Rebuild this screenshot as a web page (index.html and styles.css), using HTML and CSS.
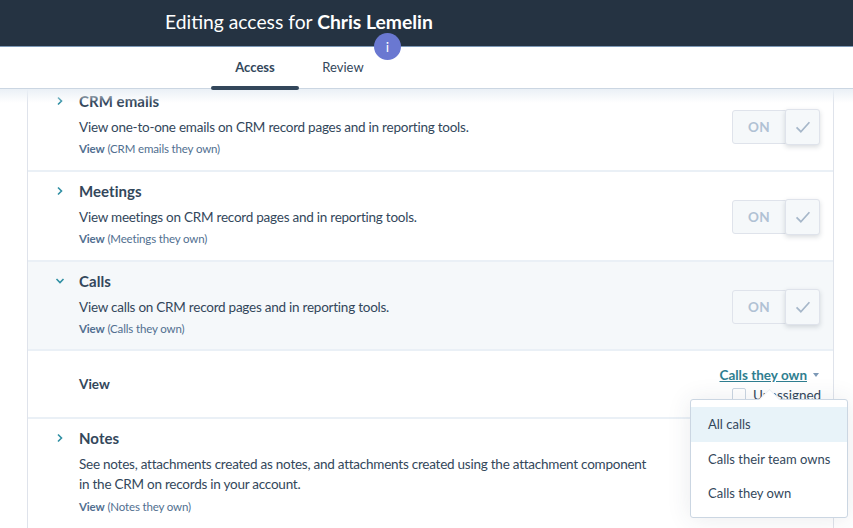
FILE: index.html
```html
<!DOCTYPE html>
<html lang="en">
<head>
<meta charset="utf-8">
<title>Editing access</title>
<link rel="stylesheet" href="styles.css">
</head>
<body>
<div class="page">
  <header class="topbar">
    <h1 class="title">Editing access for <strong>Chris Lemelin</strong></h1>
    <span class="info">i</span>
  </header>
  <nav class="tabs">
    <a class="tab active">Access</a>
    <a class="tab">Review</a>
  </nav>
  <main class="content">
    <div class="card">
      <section class="row first">
        <svg class="chev" viewBox="0 0 10 10"><path d="M3 1.5 6.5 5 3 8.5"/></svg>
        <div class="body">
          <h2>CRM emails</h2>
          <p class="desc">View one-to-one emails on CRM record pages and in reporting tools.</p>
          <p class="sub"><b>View</b> (CRM emails they own)</p>
        </div>
        <div class="toggle"><span class="on">ON</span><span class="check"><svg viewBox="0 0 18 14"><path d="M1.5 7.5 6.5 12.5 16.5 1.5"/></svg></span></div>
      </section>
      <section class="row">
        <svg class="chev" viewBox="0 0 10 10"><path d="M3 1.5 6.5 5 3 8.5"/></svg>
        <div class="body">
          <h2>Meetings</h2>
          <p class="desc">View meetings on CRM record pages and in reporting tools.</p>
          <p class="sub"><b>View</b> (Meetings they own)</p>
        </div>
        <div class="toggle"><span class="on">ON</span><span class="check"><svg viewBox="0 0 18 14"><path d="M1.5 7.5 6.5 12.5 16.5 1.5"/></svg></span></div>
      </section>
      <section class="row open">
        <svg class="chev" viewBox="0 0 10 10"><path d="M1.5 3 5 6.5 8.5 3"/></svg>
        <div class="body">
          <h2>Calls</h2>
          <p class="desc">View calls on CRM record pages and in reporting tools.</p>
          <p class="sub"><b>View</b> (Calls they own)</p>
        </div>
        <div class="toggle"><span class="on">ON</span><span class="check"><svg viewBox="0 0 18 14"><path d="M1.5 7.5 6.5 12.5 16.5 1.5"/></svg></span></div>
      </section>
      <section class="viewrow">
        <span class="viewlabel">View</span>
        <div class="scope">
          <div class="linkline"><a class="link">Calls they own</a><span class="caret"></span></div>
          <label class="unassigned"><span class="box"></span>Unassigned</label>
          <div class="popover">
            <span class="arrow"></span>
            <div class="item selected">All calls</div>
            <div class="item">Calls their team owns</div>
            <div class="item">Calls they own</div>
          </div>
        </div>
      </section>
      <section class="row last">
        <svg class="chev" viewBox="0 0 10 10"><path d="M3 1.5 6.5 5 3 8.5"/></svg>
        <div class="body">
          <h2>Notes</h2>
          <p class="desc">See notes, attachments created as notes, and attachments created using the attachment component in the CRM on records in your account.</p>
          <p class="sub"><b>View</b> (Notes they own)</p>
        </div>
      </section>
    </div>
  </main>
</div>
</body>
</html>
```
FILE: styles.css
```css
* { box-sizing: border-box; }
html, body { margin: 0; height: 100%; overflow: hidden; }
body { font-family: "Lato", "Liberation Sans", sans-serif; color: #33475b; background: #fff; }
.page { height: 528px; display: flex; flex-direction: column; position: relative; overflow: hidden; }

.topbar { height: 47px; flex: none; background: #253342; border-bottom: 1px solid #7c98b6; padding: 0 0 4px 165px; position: relative; display: flex; align-items: center; }
.title { margin: 0; font-size: 19.3px; font-weight: 400; color: #fff; white-space: nowrap; }
.title strong { font-weight: 700; }
.info { position: absolute; left: 374px; top: 33px; width: 27px; height: 27px; border-radius: 50%; background: #6a78d1; color: #fff; font-size: 14px; display: flex; align-items: center; justify-content: center; z-index: 3; }

.tabs { height: 42px; flex: none; background: #fff; display: flex; padding-left: 211px; border-bottom: 1px solid #cbd6e2; position: relative; z-index: 2; }
.tab { width: 88px; font-size: 13px; text-align: center; line-height: 40px; color: #33475b; position: relative; }
.tab.active { font-weight: 700; }
.tab.active::after { content: ""; position: absolute; left: 0; right: 0; bottom: -2px; height: 4px; border-radius: 2px; background: #33475b; }

.content { flex: 1; min-height: 0; padding: 0 19px 0 27px; position: relative; background: #fff; }
.content::before { content: ""; position: absolute; left: 0; right: 0; top: 0; height: 14px; background: linear-gradient(#eaf0f6, rgba(234,240,246,0)); z-index: 1; }
.card { border-left: 1px solid #dfe3eb; border-right: 1px solid #dfe3eb; height: 100%; }

.row { display: flex; height: 90px; padding: 9px 13px 0 0; border-bottom: 2px solid #eaf0f6; align-items: flex-start; }
.row.first { height: 83px; padding-top: 2px; }
.row.open { background: #f5f8fa; height: 89px; }
.row.last { border-bottom: 0; padding-top: 9px; }
.chev { width: 10px; height: 10px; margin: 5px 14px 0 27px; flex: none; fill: none; stroke: #2f8fa3; stroke-width: 1.6; }
.body { flex: 1; min-width: 0; }
h2 { margin: 0; font-size: 15px; line-height: 20px; font-weight: 700; color: #33475b; letter-spacing: .05px; }
.desc { margin: 6px 0 0; font-size: 13.5px; line-height: 20px; letter-spacing: -.24px; max-width: 575px; }
.sub { margin: 4px 0 0; font-size: 11.5px; line-height: 16px; color: #516f90; letter-spacing: -.15px; }
.row.last .sub { margin-top: 5px; }
.sub b { font-weight: 700; }

.toggle { display: flex; align-items: center; margin-top: 18px; flex: none; }
.on { width: 54px; height: 34px; background: #f5f8fa; border: 1px solid #dfe3eb; border-radius: 3px 0 0 3px; color: #b0c1d4; font-size: 13.5px; font-weight: 700; display: flex; align-items: center; justify-content: center; letter-spacing: 0.4px; }
.check { width: 35px; height: 36px; margin-left: -1px; background: #f5f8fa; border: 1px solid #dfe3eb; border-radius: 3px; box-shadow: 0 2px 5px rgba(45,62,80,.18); display: flex; align-items: center; justify-content: center; }
.check svg { width: 16px; height: 12px; fill: none; stroke: #a6b7c9; stroke-width: 2; }

.viewrow { height: 68px; display: flex; justify-content: space-between; padding: 0 13px 0 51px; border-bottom: 2px solid #eaf0f6; align-items: center; }
.viewlabel { font-size: 13.5px; font-weight: 700; }
.scope { position: relative; align-self: flex-start; padding-top: 15px; display: flex; flex-direction: column; align-items: flex-end; }
.linkline { display: flex; align-items: center; height: 18px; padding-right: 1px; }
.link { font-size: 13.5px; font-weight: 700; color: #2f7e90; text-decoration: underline; }
.caret { width: 0; height: 0; margin-left: 6px; border: 3.5px solid transparent; border-top: 4px solid #7c98b6; border-bottom: 0; }
.unassigned { display: flex; align-items: center; font-size: 13.5px; margin-top: 2px; color: #33475b; width: 88px; white-space: nowrap; height: 18px; }
.box { width: 14px; height: 14px; border: 1px solid #cbd6e2; border-radius: 2px; background: #fff; margin-right: 7px; flex: none; }

.popover { position: absolute; right: -28px; top: 48px; width: 158px; height: 119px; background: #fff; border: 1px solid #cbd6e2; border-radius: 3px; padding-top: 7px; box-shadow: 0 1px 24px rgba(45,62,80,.1); z-index: 4; }
.arrow { position: absolute; left: 71px; top: -8px; width: 15px; height: 15px; background: #fff; transform: rotate(45deg); border-left: 1px solid #eaf0f6; border-top: 1px solid #eaf0f6; }
.item { height: 34.5px; line-height: 34px; padding-left: 17px; font-size: 13px; color: #33475b; white-space: nowrap; position: relative; }
.item.selected { background: #e8f3f9; }
```
